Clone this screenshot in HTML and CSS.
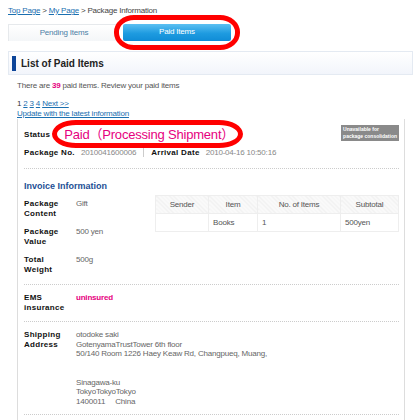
FILE: index.html
```html
<!DOCTYPE html>
<html lang="en">
<head>
    <meta charset="UTF-8">
    <title>Package Information</title>
    <link rel="stylesheet" href="styles.css">
</head>
<body>
    <div class="page">
        <p class="crumbs"><a href="#">Top Page</a> &gt; <a href="#">My Page</a> &gt; Package Information</p>

        <div class="tabs">
            <a class="tab" href="#">Pending Items</a>
            <a class="tab active" href="#">Paid Items</a>
        </div>

        <h2 class="heading">List of Paid Items</h2>

        <p class="count">There are <b>39</b> paid items. Review your paid items</p>
        <div class="pager">1 <a href="#">2</a> <a href="#">3</a> <a href="#">4</a> <a href="#">Next &gt;&gt;</a></div>
        <a class="refresh" href="#">Update with the latest information</a>

        <div class="package">
            <div class="status-row">
                <span class="label">Status</span>
                <span class="status">Paid（Processing Shipment）</span>
                <span class="badge">Unavailable for<br>package consolidation</span>
            </div>
            <div class="meta-row">
                <span class="label">Package No.</span>
                <span class="value">2010041600006</span>
                <span class="sep"></span>
                <span class="label">Arrival Date</span>
                <span class="value">2010-04-16 10:50:16</span>
            </div>

            <div class="section">
                <h3 class="sub">Invoice Information</h3>
                <div class="invoice">
                    <dl class="facts">
                        <dt>Package<br>Content</dt><dd>Gift</dd>
                        <dt>Package<br>Value</dt><dd>500 yen</dd>
                        <dt>Total<br>Weight</dt><dd>500g</dd>
                    </dl>
                    <table class="items">
                        <tr><th>Sender</th><th>Item</th><th>No. of Items</th><th>Subtotal</th></tr>
                        <tr><td></td><td>Books</td><td>1</td><td>500yen</td></tr>
                    </table>
                </div>
            </div>

            <div class="section">
                <dl class="facts">
                    <dt>EMS<br>insurance</dt><dd class="warn">uninsured</dd>
                </dl>
            </div>

            <div class="section">
                <dl class="facts address">
                    <dt>Shipping<br>Address</dt>
                    <dd>otodoke saki<br>GotenyamaTrustTower 6th floor<br>50/140 Room 1226 Haey Keaw Rd, Changpueq, Muang,<br><br><br>Sinagawa-ku<br>TokyoTokyoTokyo<br>1400011&nbsp;&nbsp;&nbsp;&nbsp;&nbsp;China</dd>
                </dl>
            </div>
            <div class="section last"></div>
        </div>
    </div>
</body>
</html>
```

FILE: styles.css
```css
body {
    margin: 0;
    font-family: "Liberation Sans", Arial, "Noto Sans CJK JP", sans-serif;
    font-size: 8px;
    letter-spacing: -0.2px;
    color: #333;
    background: #fff;
}
a {
    color: #1a6fb0;
}
.page {
    padding: 6px 7px 0 8px;
}
.crumbs {
    margin: 0 0 9px;
    font-size: 8px;
    color: #444;
}
.tabs {
    display: flex;
    gap: 4px;
    margin-bottom: 10px;
}
.tab {
    width: 110px;
    height: 16px;
    line-height: 16px;
    text-align: center;
    text-decoration: none;
    font-size: 8px;
    color: #4d7fa6;
    background: linear-gradient(#fff, #f4f6f8);
    border-top: 1px solid #e6e9ec;
    border-left: 1px solid #e6e9ec;
}
.tab.active {
    position: relative;
    width: 108px;
    height: 17px;
    color: #fff;
    border: none;
    border-radius: 2px;
    background: linear-gradient(#5cc0f2, #1e9be0 55%, #0f8cd6);
}
.tab.active::after {
    content: "";
    position: absolute;
    left: -9px;
    right: -9px;
    top: -9px;
    bottom: -9px;
    border: 5px solid #f00;
    border-radius: 20px / 17px;
}
.heading {
    margin: 0 0 6px;
    height: 22px;
    display: flex;
    align-items: center;
    font-size: 10px;
    letter-spacing: 0;
    color: #222;
    border: 1px solid #e4eaf2;
    background: linear-gradient(#fff, #f2f5fb);
}
.heading::before {
    content: "";
    width: 4px;
    height: 15px;
    margin: 0 5px 0 3px;
    background: #0d4599;
}
.count {
    margin: 0 0 9px 9px;
    color: #555;
}
.count b {
    color: #e6007e;
}
.pager {
    margin-left: 9px;
    line-height: 10px;
}
.refresh {
    display: block;
    margin-left: 9px;
    line-height: 10px;
}
.package {
    margin: 0 8px 0 9px;
    padding: 0 5px 0 6px;
    border-left: 1px solid #ddd;
    border-right: 1px solid #ddd;
}
.label, dt {
    font-weight: bold;
    color: #111;
    letter-spacing: 0.3px;
}
.status-row {
    position: relative;
    display: flex;
    align-items: center;
    height: 22px;
    padding-top: 4px;
}
.status {
    position: relative;
    margin-left: 14px;
    font-size: 13px;
    line-height: 15px;
    letter-spacing: -0.2px;
    color: #e6007e;
}
.status::before {
    content: "";
    position: absolute;
    left: -12px;
    right: -9px;
    top: -7px;
    bottom: -6px;
    border: 5px solid #f00;
    border-radius: 24px / 14px;
}
.badge {
    margin-left: auto;
    align-self: flex-start;
    margin-top: 2px;
    padding: 1px 2px;
    font-size: 5px;
    line-height: 7px;
    letter-spacing: 0;
    white-space: nowrap;
    font-weight: bold;
    color: #fff;
    background: #8a8a8a;
}
.meta-row {
    display: flex;
    align-items: center;
    height: 14px;
    padding-bottom: 9px;
    border-bottom: 1px dotted #ccc;
}
.meta-row .value {
    margin-left: 6px;
    color: #888;
}
.sep {
    width: 1px;
    height: 10px;
    margin: 0 7px;
    background: #ccc;
}
.section {
    padding: 8px 0;
    border-bottom: 1px dotted #ccc;
}
.section.last {
    padding: 0;
    height: 6px;
    border: none;
}
.sub {
    margin: 4px 0 8px;
    font-size: 9px;
    letter-spacing: 0;
    color: #1d4f95;
}
.invoice {
    display: flex;
    align-items: flex-start;
    gap: 8px;
    padding-bottom: 1px;
}
.facts {
    display: grid;
    grid-template-columns: 52px 1fr;
    row-gap: 8px;
    margin: 0;
    line-height: 10px;
}
.facts.address {
    line-height: 9.5px;
}
.invoice .facts {
    width: 123px;
}
dt {
    margin: 0;
}
dd {
    margin: 0;
    color: #666;
}
dd.warn {
    font-weight: bold;
    color: #e6007e;
}
.items {
    flex: 1;
    margin-top: -4px;
    border-collapse: collapse;
    border: 1px solid #eee;
}
.items th,
.items td {
    height: 17px;
    padding: 0 4px;
    border: 1px solid #eee;
    font-weight: normal;
    color: #555;
}
.items th {
    background: repeating-linear-gradient(45deg, #f1f1f1 0 1px, #fafafa 1px 3px);
}
.items th:nth-child(1) { width: 44px; }
.items th:nth-child(2) { width: 40px; }
.items th:nth-child(3) { width: 74px; }
```
